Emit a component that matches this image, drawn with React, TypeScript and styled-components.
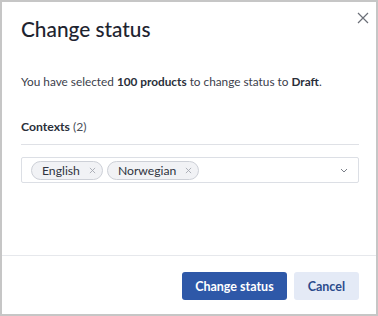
import styled, { createGlobalStyle } from "styled-components";

const GlobalStyle = createGlobalStyle`
  html, body {
    margin: 0;
    padding: 0;
    background: #ffffff;
  }
  body {
    font-family: "Lato", "Open Sans", sans-serif;
    -webkit-font-smoothing: antialiased;
  }
`;

const Dialog = styled.div`
  width: 378px;
  height: 316px;
  box-sizing: border-box;
  border: 2px solid #c6c6c6;
  background: #ffffff;
  display: flex;
  flex-direction: column;
  position: relative;
`;

const CloseButton = styled.button`
  position: absolute;
  top: 7px;
  right: 4px;
  width: 18px;
  height: 18px;
  padding: 0;
  border: none;
  background: none;
  display: flex;
  align-items: center;
  justify-content: center;
  cursor: pointer;
`;

const Body = styled.div`
  flex: 1;
  padding: 15px 17px 0 19px;
`;

const Title = styled.h1`
  margin: 0;
  font-size: 20.8px;
  line-height: 24px;
  font-weight: 500;
  color: #1e2430;
`;

const Message = styled.p`
  margin: 33px 0 0;
  font-size: 11.8px;
  line-height: 16px;
  color: #3b404b;

  strong {
    font-weight: 700;
    color: #2a2f3a;
  }
`;

const SectionLabel = styled.div`
  margin-top: 29px;
  padding-bottom: 9px;
  border-bottom: 1px solid #dfe1e6;
  font-size: 12.2px;
  line-height: 16px;
  color: #2a2f3a;

  b {
    font-weight: 700;
  }
  span {
    color: #4a4f59;
  }
`;

const Select = styled.div`
  margin-top: 12px;
  height: 26px;
  box-sizing: border-box;
  border: 1px solid #dcdfe5;
  border-radius: 2px;
  display: flex;
  align-items: center;
  padding: 0 10px 0 9px;
  gap: 4px;
`;

const Chip = styled.span`
  display: inline-flex;
  align-items: center;
  height: 19px;
  box-sizing: border-box;
  border: 1px solid #cdd0d7;
  border-radius: 10px;
  background: #f1f2f5;
  padding: 0 6px 0 10px;
  gap: 9px;
  font-size: 12.2px;
  color: #2f3440;
`;

const ChipRemove = styled.svg`
  width: 7px;
  height: 7px;
`;

const Chevron = styled.svg`
  margin-left: auto;
  width: 8px;
  height: 5px;
`;

const Footer = styled.div`
  border-top: 1px solid #e6e8ec;
  height: 59px;
  box-sizing: border-box;
  display: flex;
  justify-content: flex-end;
  align-items: flex-start;
  padding: 16px 17px 0 0;
  gap: 7px;
`;

const Button = styled.button<{ $primary?: boolean }>`
  height: 28px;
  border: none;
  border-radius: 3px;
  font-family: "Lato", "Open Sans", sans-serif;
  font-size: 12.5px;
  font-weight: 700;
  padding: 0 ${({ $primary }) => ($primary ? "13px" : "14px")};
  background: ${({ $primary }) => ($primary ? "#2e58a8" : "#e4eaf6")};
  color: ${({ $primary }) => ($primary ? "#ffffff" : "#2b4b8c")};
  cursor: pointer;
`;

const RemoveIcon = () => (
  <ChipRemove viewBox="0 0 8 8">
    <path d="M1 1l6 6M7 1L1 7" stroke="#a3a7b0" strokeWidth="1" />
  </ChipRemove>
);

export default function App() {
  const contexts = ["English", "Norwegian"];

  return (
    <>
      <GlobalStyle />
      <Dialog>
        <CloseButton aria-label="Close">
          <svg width="12" height="12" viewBox="0 0 12 12">
            <path d="M1 1l10 10M11 1L1 11" stroke="#6b6f78" strokeWidth="1.2" />
          </svg>
        </CloseButton>
        <Body>
          <Title>Change status</Title>
          <Message>
            You have selected <strong>100 products</strong> to change status to{" "}
            <strong>Draft</strong>.
          </Message>
          <SectionLabel>
            <b>Contexts</b> <span>(2)</span>
          </SectionLabel>
          <Select>
            {contexts.map((c) => (
              <Chip key={c}>
                {c}
                <RemoveIcon />
              </Chip>
            ))}
            <Chevron viewBox="0 0 8 5">
              <path d="M1 1l3 3 3-3" fill="none" stroke="#7b7f88" strokeWidth="1" />
            </Chevron>
          </Select>
        </Body>
        <Footer>
          <Button $primary>Change status</Button>
          <Button>Cancel</Button>
        </Footer>
      </Dialog>
    </>
  );
}
